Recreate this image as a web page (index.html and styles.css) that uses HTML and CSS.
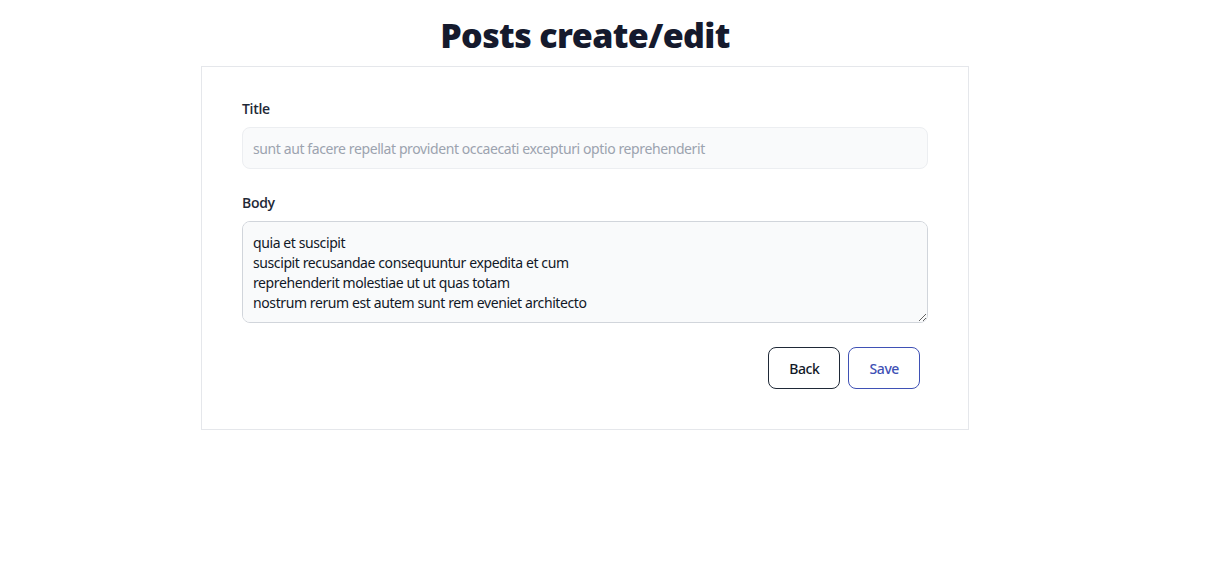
FILE: index.html
```html
<!DOCTYPE html>
<html lang="en">
<head>
<meta charset="utf-8">
<title>Posts create/edit</title>
<link rel="stylesheet" href="styles.css">
</head>
<body>
<main class="page">
  <h1 class="page-title">Posts create/edit</h1>
  <form class="card">
    <div class="field">
      <label class="label" for="title">Title</label>
      <input class="input" id="title" type="text" placeholder="sunt aut facere repellat provident occaecati excepturi optio reprehenderit">
    </div>
    <div class="field">
      <label class="label" for="body">Body</label>
      <textarea class="textarea" id="body" rows="4">quia et suscipit
suscipit recusandae consequuntur expedita et cum
reprehenderit molestiae ut ut quas totam
nostrum rerum est autem sunt rem eveniet architecto</textarea>
    </div>
    <div class="actions">
      <button type="button" class="btn btn-back">Back</button>
      <button type="submit" class="btn btn-save">Save</button>
    </div>
  </form>
</main>
</body>
</html>
```
FILE: styles.css
```css
* { box-sizing: border-box; }
html, body { margin: 0; padding: 0; background: #fff; }
body {
  font-family: "Noto Sans", "Open Sans", sans-serif;
  color: #111827;
}
.page {
  width: 1170px;
  padding-top: 10px;
}
.page-title {
  margin: 0 0 6px;
  text-align: center;
  font-size: 34px;
  letter-spacing: -0.6px;
  line-height: 50px;
  font-weight: 900;
  color: #151a2d;
}
.card {
  width: 768px;
  margin: 0 auto;
  border: 1px solid #e5e7eb;
  padding: 32px 40px 40px;
  display: flex;
  flex-direction: column;
  gap: 24px;
}
.field {
  display: flex;
  flex-direction: column;
  gap: 8px;
}
.label {
  font-family: "Open Sans", "Noto Sans", sans-serif;
  font-size: 14px;
  line-height: 20px;
  font-weight: 600;
  letter-spacing: -0.3px;
  color: #1f2937;
}
.input, .textarea {
  width: 100%;
  font-family: inherit;
  font-size: 14px;
  letter-spacing: -0.4px;
  line-height: 20px;
  color: #111827;
  background: #f9fafb;
  border-radius: 8px;
  padding: 10px 10px;
  outline: none;
}
.input {
  height: 42px;
  border: 1px solid #eceef1;
}
.input::placeholder { color: #9ca3af; }
.textarea {
  height: 102px;
  padding-top: 11px;
  border: 1px solid #d1d5db;
  resize: vertical;
  display: block;
}
.actions {
  display: flex;
  justify-content: flex-end;
  gap: 8px;
  padding-right: 8px;
}
.btn {
  height: 42px;
  padding: 0 20px;
  border-radius: 8px;
  background: #fff;
  font-family: inherit;
  font-size: 14px;
  letter-spacing: -0.4px;
  font-weight: 500;
  cursor: pointer;
}
.btn-back {
  border: 1px solid #1f2937;
  color: #111827;
}
.btn-save {
  border: 1px solid #3f51b5;
  color: #3f51b5;
}
```
